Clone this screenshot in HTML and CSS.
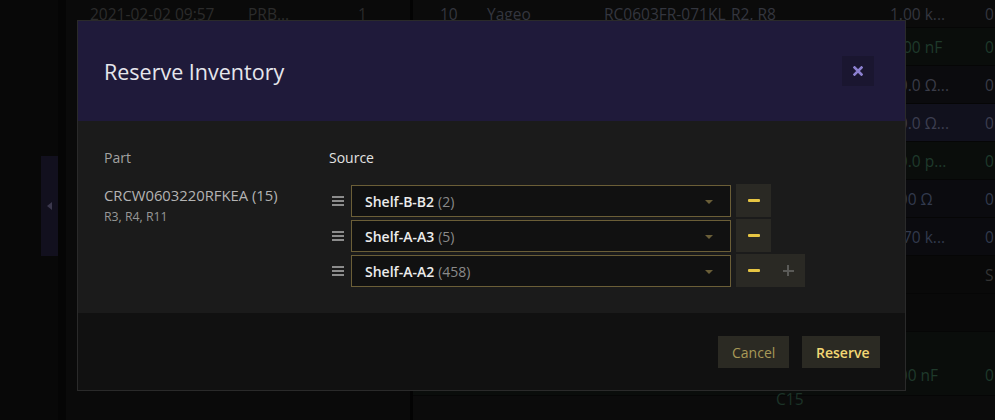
FILE: index.html
```html
<!DOCTYPE html>
<html lang="en">
<head>
    <meta charset="UTF-8">
    <meta name="viewport" content="width=device-width, initial-scale=1.0">
    <title>Reserve Inventory</title>
    <link rel="stylesheet" href="styles.css">
</head>
<body>
    <div class="app">
        <aside class="nav">
            <div class="rail-tab"><span class="rail-arrow"></span></div>
        </aside>
        <div class="gutter"></div>
        <section class="history">
            <div class="hrow">
                <span class="h-date">2021-02-02 09:57</span>
                <span class="h-ref">PRB...</span>
                <span class="h-qty">1</span>
            </div>
        </section>
        <div class="divider"></div>
        <section class="bom">
            <div class="brow first">
                <span class="c-num">10</span>
                <span class="c-mfr">Yageo</span>
                <span class="c-mpn">RC0603FR-071KL</span>
                <span class="c-des">R2, R8</span>
                <span class="c-val">1.00 k...</span>
                <span class="c-stk">0</span>
            </div>
            <div class="brow cap"><span class="c-val">1.00 nF</span><span class="c-stk">0</span></div>
            <div class="brow res"><span class="c-val">10.0 Ω...</span><span class="c-stk">0</span></div>
            <div class="brow sel"><span class="c-val">10.0 Ω...</span><span class="c-stk">0</span></div>
            <div class="brow cap"><span class="c-val">10.0 p...</span><span class="c-stk">0</span></div>
            <div class="brow blue"><span class="c-val">100 Ω</span><span class="c-stk">0</span></div>
            <div class="brow blue"><span class="c-val">4.70 k...</span><span class="c-stk">0</span></div>
            <div class="brow plain"><span class="c-stk">S</span></div>
            <div class="brow plain"></div>
            <div class="brow cap tall">
                <span class="c-val">100 nF</span><span class="c-stk">0</span>
                <span class="c-sub">C15</span>
            </div>
        </section>
    </div>

    <div class="backdrop">
        <div class="modal">
            <div class="modal-header">
                <h2>Reserve Inventory</h2>
                <button class="close-btn"><svg width="10" height="10" viewBox="0 0 10 10"><path d="M1.5 1.5 L8.5 8.5 M8.5 1.5 L1.5 8.5"/></svg></button>
            </div>
            <div class="modal-body">
                <div class="part-col">
                    <div class="label">Part</div>
                    <div class="part-name">CRCW0603220RFKEA (15)</div>
                    <div class="part-des">R3, R4, R11</div>
                </div>
                <div class="source-col">
                    <div class="label strong">Source</div>
                    <div class="source-list">
                        <div class="source-row">
                            <span class="handle"><svg width="12" height="10" viewBox="0 0 12 10"><rect y="0" width="12" height="2"/><rect y="4" width="12" height="2"/><rect y="8" width="12" height="2"/></svg></span>
                            <div class="select">Shelf-B-B2 <span class="count">(2)</span><span class="caret"></span></div>
                            <div class="btn-group">
                                <button class="icon-btn minus"><span></span></button>
                            </div>
                        </div>
                        <div class="source-row">
                            <span class="handle"><svg width="12" height="10" viewBox="0 0 12 10"><rect y="0" width="12" height="2"/><rect y="4" width="12" height="2"/><rect y="8" width="12" height="2"/></svg></span>
                            <div class="select">Shelf-A-A3 <span class="count">(5)</span><span class="caret"></span></div>
                            <div class="btn-group">
                                <button class="icon-btn minus"><span></span></button>
                            </div>
                        </div>
                        <div class="source-row">
                            <span class="handle"><svg width="12" height="10" viewBox="0 0 12 10"><rect y="0" width="12" height="2"/><rect y="4" width="12" height="2"/><rect y="8" width="12" height="2"/></svg></span>
                            <div class="select">Shelf-A-A2 <span class="count">(458)</span><span class="caret"></span></div>
                            <div class="btn-group">
                                <button class="icon-btn minus"><span></span></button>
                                <button class="icon-btn plus"><span></span></button>
                            </div>
                        </div>
                    </div>
                </div>
            </div>
            <div class="modal-footer">
                <button class="btn cancel">Cancel</button>
                <button class="btn primary">Reserve</button>
            </div>
        </div>
    </div>
</body>
</html>
```

FILE: styles.css
```css
* {
    box-sizing: border-box;
}
body {
    margin: 0;
    width: 995px;
    height: 420px;
    overflow: hidden;
    background: #080808;
    font-family: "Open Sans", "Noto Sans", sans-serif;
    font-size: 14px;
    position: relative;
}
button {
    font-family: inherit;
    border: none;
    cursor: pointer;
}

/* app behind the dialog */
.app {
    display: flex;
    height: 420px;
}
.nav {
    width: 58px;
    background: #080808;
    padding-top: 156px;
    display: flex;
    justify-content: flex-end;
}
.rail-tab {
    width: 17px;
    height: 100px;
    background: #12101e;
    display: flex;
    align-items: center;
    justify-content: center;
}
.rail-arrow {
    width: 0;
    height: 0;
    border-top: 4px solid transparent;
    border-bottom: 4px solid transparent;
    border-right: 5px solid #3b384d;
}
.gutter {
    width: 8px;
    background: #050505;
}
.history {
    width: 344px;
    background: #0a0a0a;
}
.hrow {
    height: 28px;
    display: flex;
    align-items: center;
    color: #2c2c2c;
    font-size: 15.5px;
}
.h-date {
    margin-left: 24px;
    width: 158px;
}
.h-ref {
    width: 110px;
}
.divider {
    width: 3px;
    background: #030303;
}
.bom {
    flex: 1;
    background: #0b0b0b;
    font-size: 15.5px;
}
.brow {
    height: 38px;
    position: relative;
    display: flex;
    align-items: center;
    border-bottom: 1px solid #060606;
    color: #383b47;
}
.brow.first {
    height: 28px;
    color: #34363f;
}
.brow.cap {
    background: #0a0d0b;
    color: #1f3a2b;
}
.brow.res {
    background: #0b0b0e;
    color: #3a3c48;
}
.brow.sel {
    background: #11111d;
    color: #3c3e50;
}
.brow.blue {
    background: #0b0b0f;
    color: #323a4d;
}
.brow.plain {
    background: #090909;
    color: #333;
}
.brow.tall {
    height: 64px;
    align-items: flex-start;
}
.brow.tall .c-val,
.brow.tall .c-stk {
    top: 32px;
}
.c-num { position: absolute; left: 27px; }
.c-mfr { position: absolute; left: 74px; }
.c-mpn { position: absolute; left: 191px; }
.c-des { position: absolute; left: 318px; }
.c-val { position: absolute; left: 477px; }
.c-stk { position: absolute; left: 572px; }
.c-sub { position: absolute; left: 363px; top: 56px; color: #1c3328; }

/* dialog */
.backdrop {
    position: absolute;
    inset: 0;
    padding: 20px 0 0 77px;
}
.modal {
    width: 829px;
    height: 371px;
    border: 1px solid #2a2a2a;
    background: #1b1b1b;
    display: flex;
    flex-direction: column;
}
.modal-header {
    height: 100px;
    background: #1f1a3a;
    display: flex;
    align-items: center;
    justify-content: space-between;
    padding: 0 31px 0 26px;
}
.modal-header h2 {
    margin: 0;
    font-size: 21.5px;
    font-weight: 400;
    color: #e6e6ec;
}
.close-btn {
    width: 32px;
    height: 30px;
    background: #1a1630;
    padding: 0;
    display: flex;
    align-items: center;
    justify-content: center;
}
.close-btn svg {
    stroke: #8c80d0;
    stroke-width: 2.6;
    stroke-linecap: square;
}
.modal-body {
    height: 192px;
    display: flex;
    padding: 27px 26px 0 26px;
}
.part-col {
    width: 225px;
}
.label {
    height: 20px;
    line-height: 20px;
    color: #a2a2a2;
    margin-bottom: 17px;
}
.label.strong {
    color: #e2e2e2;
}
.part-name {
    color: #b4b4b4;
    font-size: 14.8px;
    line-height: 20px;
}
.part-des {
    color: #979797;
    font-size: 12.3px;
    line-height: 18px;
    margin-top: 3px;
}
.source-list {
    display: flex;
    flex-direction: column;
    gap: 2px;
    margin-top: -1px;
}
.source-row {
    display: flex;
    align-items: flex-end;
    height: 33px;
}
.handle {
    width: 22px;
    height: 32px;
    padding-left: 3px;
    display: flex;
    align-items: center;
}
.handle svg {
    fill: #8c8c8c;
}
.select {
    width: 380px;
    height: 32px;
    border: 1px solid #6b5e37;
    background: #111111;
    color: #ececec;
    font-weight: 600;
    padding-left: 13px;
    display: flex;
    align-items: center;
    gap: 4px;
    position: relative;
}
.count {
    color: #8a8a8a;
    font-weight: 400;
}
.caret {
    position: absolute;
    right: 17px;
    top: 14px;
    width: 0;
    height: 0;
    border-left: 4px solid transparent;
    border-right: 4px solid transparent;
    border-top: 4px solid #6a5e38;
}
.btn-group {
    display: flex;
    margin-left: 5px;
    height: 33px;
    background: #2a2924;
}
.icon-btn {
    width: 35px;
    height: 33px;
    background: transparent;
    padding: 0;
    position: relative;
}
.icon-btn.plus {
    width: 34px;
}
.minus span {
    display: block;
    width: 12px;
    height: 3px;
    margin: 0 auto;
    background: #e6c543;
    border-radius: 1px;
}
.plus span {
    display: block;
    width: 11px;
    height: 11px;
    margin: 0 auto;
    position: relative;
}
.plus span::before,
.plus span::after {
    content: "";
    position: absolute;
    background: #5a5a57;
}
.plus span::before {
    left: 0;
    top: 4.5px;
    width: 11px;
    height: 2px;
}
.plus span::after {
    left: 4.5px;
    top: 0;
    width: 2px;
    height: 11px;
}
.modal-footer {
    flex: 1;
    background: #111111;
    display: flex;
    justify-content: flex-end;
    align-items: flex-start;
    gap: 13px;
    padding: 23px 25px 0 0;
}
.btn {
    height: 32px;
    background: #2b2a23;
    font-size: 14px;
    padding: 0 14px;
}
.btn.cancel {
    width: 71px;
    color: #a89957;
}
.btn.primary {
    width: 78px;
    color: #f2d774;
    font-weight: 600;
}
```
